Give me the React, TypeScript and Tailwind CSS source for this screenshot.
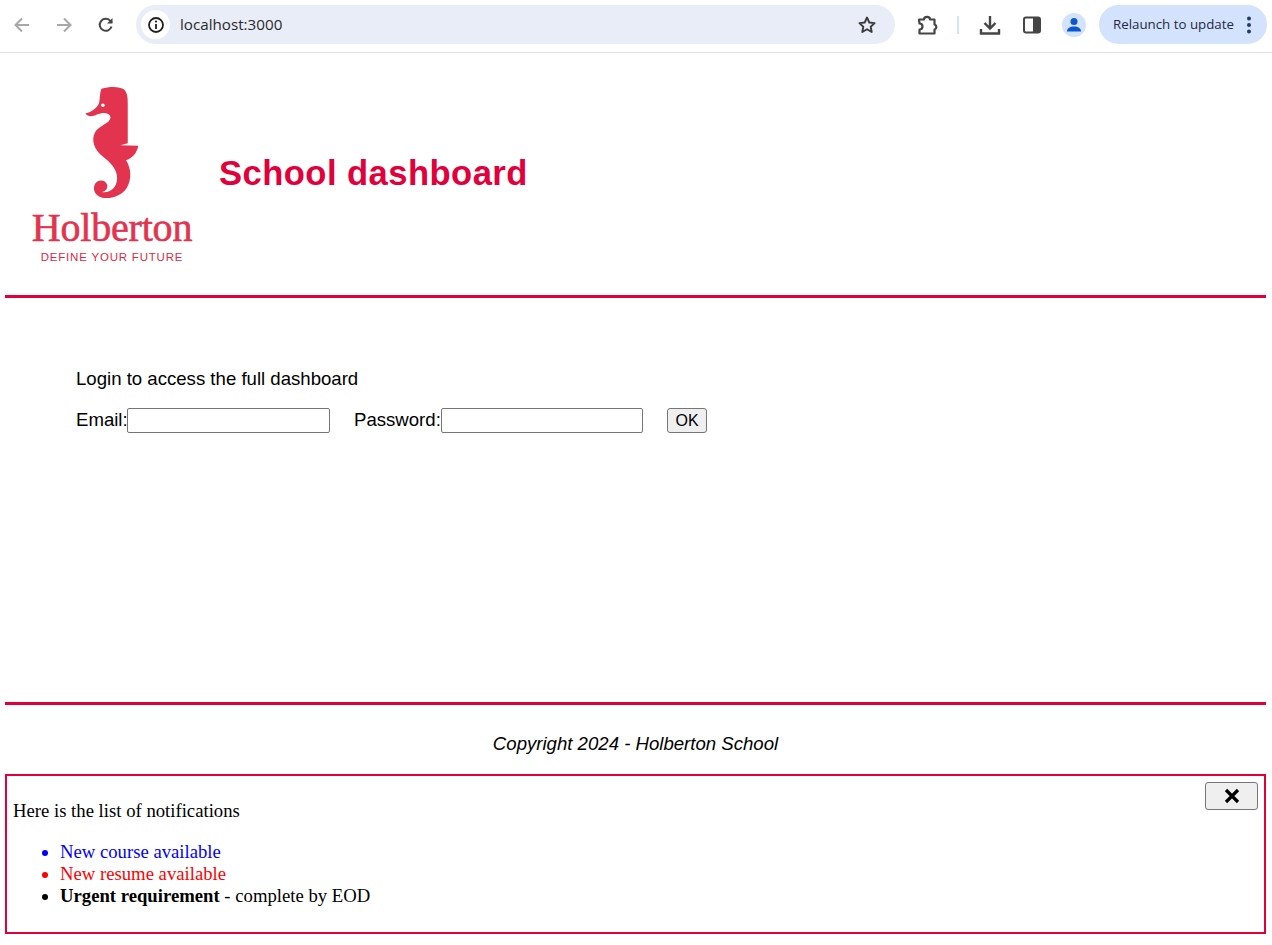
import React from 'react';

const Toolbar: React.FC = () => (
  <div className="flex h-[53px] items-center border-b border-[#e0e0e0] bg-white pb-[3px] pl-px font-['Open_Sans',sans-serif]">
    <button className="flex w-[42px] justify-center">
      <svg width="20" height="20" viewBox="0 0 20 20" fill="none" stroke="#a8a8a8" strokeWidth="2"><path d="M17 10H4M10 3.5 3.5 10l6.5 6.5" /></svg>
    </button>
    <button className="flex w-[42px] justify-center">
      <svg width="20" height="20" viewBox="0 0 20 20" fill="none" stroke="#a8a8a8" strokeWidth="2"><path d="M3 10h13M10 3.5l6.5 6.5-6.5 6.5" /></svg>
    </button>
    <button className="flex w-[42px] justify-center">
      <svg width="20" height="20" viewBox="0 0 20 20" fill="none" stroke="#454545" strokeWidth="2"><path d="M15.5 11.5A6 6 0 1 1 14 5.6L16 7.6" /><path d="M16.5 3v5.5H11" fill="#454545" stroke="none" /></svg>
    </button>
    <div className="ml-[9px] flex h-[39px] w-[759px] items-center rounded-full bg-[#e9edf7] pl-[5px] pr-[18px]">
      <div className="flex h-[29px] w-[29px] items-center justify-center rounded-full bg-white">
        <svg width="18" height="18" viewBox="0 0 18 18" fill="none"><circle cx="9" cy="9" r="7" stroke="#1f1f1f" strokeWidth="1.8" /><path d="M9 8v5" stroke="#1f1f1f" strokeWidth="1.8" /><circle cx="9" cy="5.6" r="1.1" fill="#1f1f1f" /></svg>
      </div>
      <span className="ml-[10px] flex-1 text-[15.200px] text-[#2a2a2a]">localhost:3000</span>
      <svg width="20" height="20" viewBox="0 0 20 20" fill="none" stroke="#3c3c3c" strokeWidth="1.9" strokeLinejoin="round"><path d="m10 2.5 2.3 5 5.3.6-3.9 3.6 1 5.3-4.7-2.7-4.7 2.7 1-5.3-3.9-3.6 5.3-.6z" /></svg>
    </div>
    <svg className="ml-[20px]" width="24" height="24" viewBox="0 0 24 24" fill="none" stroke="#454545" strokeWidth="2.2" strokeLinejoin="round"><path d="M4 6.5h5a3 2.6 0 0 1 6 0h4.5v5a2.6 2.6 0 0 1 0 5v4H4.500v-4a3 3 0 0 0 0-6z" /></svg>
    <div className="ml-[18px] h-[18px] w-[2px] bg-[#d3e3fd]" />
    <svg className="ml-[19px]" width="24" height="24" viewBox="0 0 24 24" fill="none" stroke="#454545" strokeWidth="2.4"><path d="M12 3v12M6.500 10l5.500 5.500 5.500-5.500M3 16v4.500h18V16" /></svg>
    <svg className="ml-[20px]" width="20" height="20" viewBox="0 0 20 20"><rect x="2" y="2.500" width="16" height="15" rx="2" fill="none" stroke="#454545" strokeWidth="2" /><rect x="11" y="2.500" width="7" height="15" fill="#454545" /></svg>
    <div className="ml-[20px] flex h-[24px] w-[24px] items-center justify-center rounded-full bg-[#d3e3fd]">
      <svg width="16" height="16" viewBox="0 0 16 16" fill="#0b57d0"><circle cx="8" cy="4.500" r="3.500" /><path d="M1 14.500c0-3.500 3-5 7-5s7 1.500 7 5z" /></svg>
    </div>
    <div className="ml-[13px] flex h-[39px] w-[168px] items-center rounded-full bg-[#d3e3fd] pl-[14px]">
      <span className="text-[13.3px] whitespace-nowrap text-[#1f2a44]">Relaunch to update</span>
      <svg className="ml-[12px]" width="6" height="20" viewBox="0 0 6 20" fill="#1f3a6e"><circle cx="3" cy="3.500" r="2" /><circle cx="3" cy="10" r="2" /><circle cx="3" cy="16.500" r="2" /></svg>
    </div>
  </div>
);

const Logo: React.FC = () => (
  <div className="flex w-[184px] flex-col items-center pt-[2px] text-[#e2344f]">
    <svg className="mt-[-1px]" width="58" height="115" viewBox="190 30 175 345" fill="#e2344f">
      <path d="M197 115C212 112 232 100 238 85C242 70 240 52 246 40C270 33 300 32 315 43C325 55 325 70 325 85L325 205L303 211L357 212C352 235 340 248 320 256C335 280 338 312 322 340C305 365 272 374 248 369C226 364 218 345 226 328C236 312 258 315 263 330C265 342 258 350 247 352C272 356 292 338 293 312C294 282 272 262 248 243C224 224 214 195 226 172C238 150 272 146 273 126C270 112 250 110 232 118C220 124 205 127 197 115Z" />
      <circle cx="250" cy="90" r="5.500" fill="#ffffff" />
    </svg>
    <span className="mt-[8px] font-['Liberation_Serif',serif] text-[40px] leading-[40px] tracking-[-0.2px] [-webkit-text-stroke:0.6px_#e2344f]">Holberton</span>
    <span className="mt-[2px] font-['Liberation_Sans',sans-serif] text-[11.500px] leading-[14px] tracking-[0.8px] whitespace-nowrap text-[#d92b48]">DEFINE YOUR FUTURE</span>
  </div>
);

export default function App() {
  return (
    <div className="min-h-[945px] bg-white text-black">
      <Toolbar />
      <div className="mr-[6px] ml-[5px] font-['Liberation_Sans',sans-serif]">
        <header className="flex h-[245px] items-center border-b-[3px] border-[#e1003c] pl-[15px]">
          <Logo />
          <h1 className="ml-[15px] text-[34.600px] font-bold tracking-[0.45px] text-[#e1003c]">School dashboard</h1>
        </header>
        <main className="h-[404px] pl-[71px] pt-[69px] text-[18.600px]">
          <p className="leading-[24px]">Login to access the full dashboard</p>
          <form className="mt-[15px] flex items-center">
            <label className="w-[51px] pb-[2px]">Email:</label>
            <input type="text" className="h-[25px] w-[203px] rounded-[2px] border border-[#767676] bg-white" />
            <label className="ml-[24px] w-[87px] pb-[2px]">Password:</label>
            <input type="password" className="h-[25px] w-[202px] rounded-[2px] border border-[#767676] bg-white" />
            <button type="button" className="ml-[24px] h-[25px] w-[40px] rounded-[3px] border border-[#767676] bg-[#efefef] text-[16px]">OK</button>
          </form>
        </main>
        <footer className="h-[72px] border-t-[3px] border-[#e1003c] pt-[27px] text-center text-[18.600px] leading-[24px] italic">
          Copyright 2024 - Holberton School
        </footer>
        <div className="relative h-[160px] border-2 border-[#e1003c] pl-[6px] pt-[24px] font-['Liberation_Serif',serif] text-[18.700px] leading-[22px]">
          <button className="absolute top-[6px] right-[6px] flex h-[28px] w-[53px] items-center justify-center rounded-[3px] border border-[#767676] bg-[#efefef]">
            <svg width="16" height="16" viewBox="0 0 16 16" stroke="#000000" strokeWidth="3.200"><path d="M2 2l12 12M14 2 2 14" /></svg>
          </button>
          <p>Here is the list of notifications</p>
          <ul className="mt-[19px] list-disc pl-[47px]">
            <li className="text-[#0000ff]">New course available</li>
            <li className="text-[#ff0000]">New resume available</li>
            <li><strong>Urgent requirement</strong> - complete by EOD</li>
          </ul>
        </div>
      </div>
    </div>
  );
}
